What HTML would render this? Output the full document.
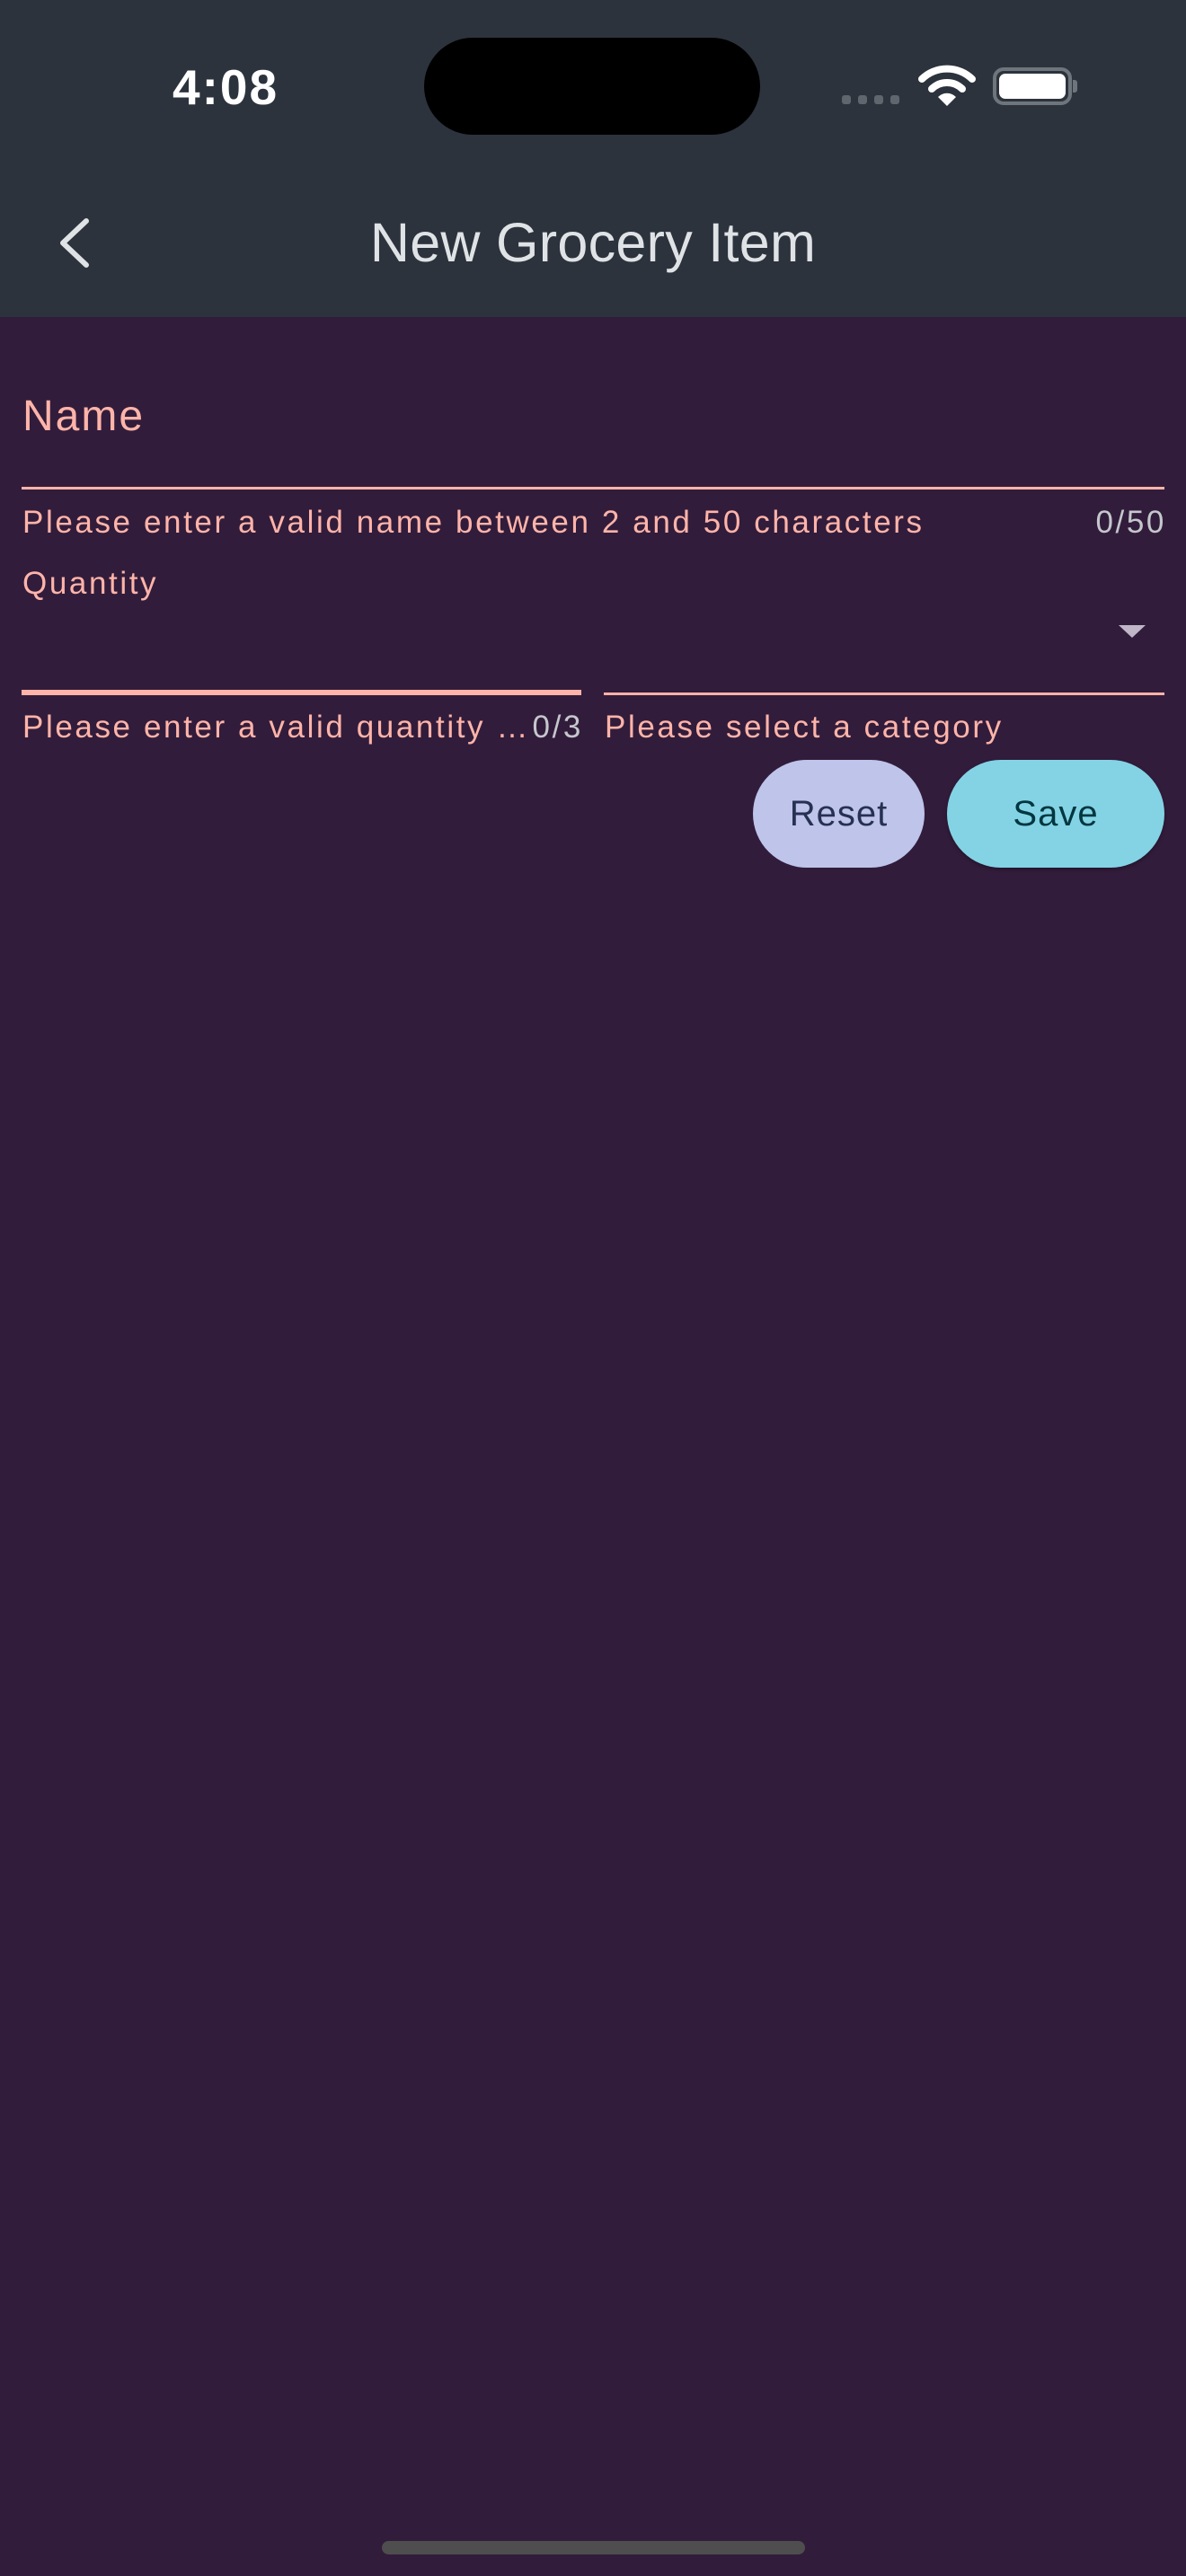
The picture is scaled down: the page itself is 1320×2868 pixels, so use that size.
<!DOCTYPE html>
<html><head><meta charset="utf-8"><style>
*{margin:0;padding:0;box-sizing:border-box}
body{width:1320px;height:2868px;background:#321c3b;font-family:"Liberation Sans",sans-serif;position:relative;overflow:hidden}
.abs{position:absolute;white-space:nowrap;line-height:1}
.pink{color:#ffb4a9}
.gray{color:#c4c8cc}
.h{font-size:35px;letter-spacing:2.6px}
</style></head><body>
<div class="abs" style="left:0;top:0;width:1320px;height:353px;background:#2c333d"></div>
<div class="abs" style="left:192px;top:70px;font-size:55px;font-weight:bold;color:#fff;letter-spacing:2px">4:08</div>
<div class="abs" style="left:472px;top:42px;width:374px;height:108px;border-radius:54px;background:#000"></div>
<div class="abs" style="left:937px;top:106px;width:10px;height:10px;border-radius:3px;background:#5f666e"></div>
<div class="abs" style="left:955px;top:106px;width:10px;height:10px;border-radius:3px;background:#5f666e"></div>
<div class="abs" style="left:973px;top:106px;width:10px;height:10px;border-radius:3px;background:#5f666e"></div>
<div class="abs" style="left:991px;top:106px;width:10px;height:10px;border-radius:3px;background:#5f666e"></div>
<svg class="abs" style="left:1022px;top:72px" width="64" height="48" viewBox="0 0 64 48">
<path d="M4 16 A40 40 0 0 1 60 16" stroke="#fff" stroke-width="8" fill="none" stroke-linecap="round"/>
<path d="M15 27 A24 24 0 0 1 49 27" stroke="#fff" stroke-width="8" fill="none" stroke-linecap="round"/>
<path d="M22 36 A14 14 0 0 1 42 36 L32 46 Z" fill="#fff"/>
</svg>
<div class="abs" style="left:1105px;top:75px;width:88px;height:42px;border:4px solid #6e757c;border-radius:12px"></div>
<div class="abs" style="left:1112px;top:82px;width:74px;height:28px;border-radius:7px;background:#fff"></div>
<div class="abs" style="left:1194px;top:89px;width:5px;height:14px;border-radius:0 3px 3px 0;background:#6e757c"></div>
<svg class="abs" style="left:0;top:0" width="200" height="353"><path d="M96 246 L70 270.5 L96 295" stroke="#dfe3e6" stroke-width="6" fill="none" stroke-linecap="round" stroke-linejoin="round"/></svg>
<div class="abs" style="left:0;width:1320px;text-align:center;top:240px;font-size:61px;color:#dfe3e6;letter-spacing:0.3px">New Grocery Item</div>

<div class="abs pink" style="left:25px;top:440px;font-size:48px;letter-spacing:2px">Name</div>
<div class="abs" style="left:24px;top:542px;width:1272px;height:3px;background:#ffb4a9"></div>
<div class="abs pink h" style="left:25px;top:564px">Please enter a valid name between 2 and 50 characters</div>
<div class="abs gray h" style="right:22px;top:564px">0/50</div>
<div class="abs pink h" style="left:25px;top:632px">Quantity</div>
<svg class="abs" style="left:1244px;top:695px" width="32" height="16"><path d="M1 1 L31 1 L16 15 Z" fill="#c0b6c8"/></svg>
<div class="abs" style="left:24px;top:768px;width:623px;height:6px;background:#ffb4a9"></div>
<div class="abs" style="left:672px;top:771px;width:624px;height:3px;background:#ffb4a9"></div>
<div class="abs pink h" style="left:25px;top:792px">Please enter a valid quantity …</div>
<div class="abs gray h" style="right:671px;top:792px">0/3</div>
<div class="abs pink h" style="left:673px;top:792px">Please select a category</div>

<div class="abs" style="left:838px;top:846px;width:191px;height:120px;border-radius:60px;background:#bec4ea;color:#273152;font-size:40px;display:flex;align-items:center;justify-content:center;letter-spacing:1px">Reset</div>
<div class="abs" style="left:1054px;top:846px;width:242px;height:120px;border-radius:60px;background:#83d3e5;color:#00363f;font-size:40px;display:flex;align-items:center;justify-content:center;letter-spacing:1px;box-shadow:0 2px 4px rgba(0,0,0,.3)">Save</div>

<div class="abs" style="left:425px;top:2829px;width:471px;height:15px;border-radius:8px;background:#4e4e4e"></div>
</body></html>
